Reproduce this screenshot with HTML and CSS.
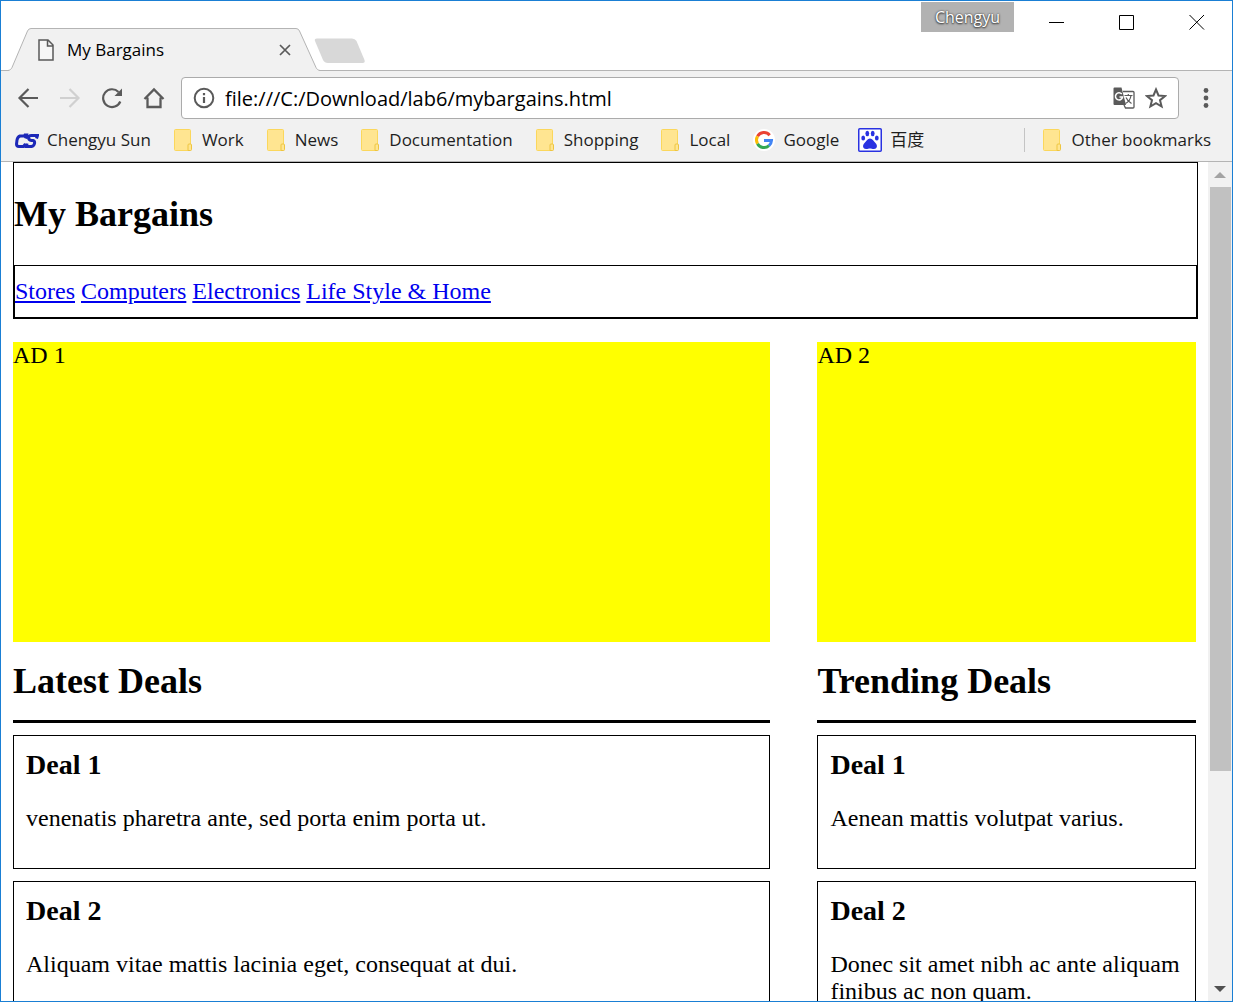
FILE: index.html
```
<!DOCTYPE html>
<html lang="en">
<head>
<meta charset="utf-8">
<title>My Bargains</title>
<link rel="stylesheet" href="styles.css">
</head>
<body>
<svg class="sprite" aria-hidden="true">
  <symbol id="folder" viewBox="0 0 18 22">
    <rect x="0.5" y="0.5" width="16" height="21" rx="1" fill="#ffe591" stroke="#fbd75c"/>
    <path d="M14 21.5v-5.500a1 1 0 0 1 1-1h1.500a1 1 0 0 1 1 1v4.500a1 1 0 0 1-1 1z" fill="#ffe591" stroke="#eec540"/>
  </symbol>
</svg>
<div class="window">
  <header class="titlebar">
    <div class="tabs">
      <div class="tab">
        <svg class="tab-shape" viewBox="0 0 312 43" preserveAspectRatio="none" aria-hidden="true"><path d="M0 43C2 42 3 41.500 4 39.500L19.500 3Q20.500 0.500 23 0.500H288Q290.500 0.500 291.500 3L308 39.500C309 41.500 310 42 312 43Z" fill="#f1f1f1"/><path d="M0 42.500C2 42 3 41.500 4 39.500L19.500 3Q20.500 0.500 23 0.500H288Q290.500 0.500 291.500 3L308 39.500C309 41.500 310 42 312 42.500" fill="none" stroke="#b4b4b4"/></svg>
        <svg class="page-icon" width="16" height="22" viewBox="0 0 16 22" aria-hidden="true"><path d="M1 1h9l5 5v15H1zM9.500 1v6H15" fill="#f7f7f7" stroke="#5a5a5a" stroke-width="1.500"/></svg>
        <span class="tab-title">My Bargains</span>
        <button class="tab-close" aria-label="Close tab"><svg width="12" height="12" viewBox="0 0 12 12"><path d="M1 1l10 10M11 1L1 11" stroke="#5a5a5a" stroke-width="1.700"/></svg></button>
      </div>
      <button class="new-tab" aria-label="New tab"><svg width="52" height="26" viewBox="0 0 52 26"><path d="M3 0.500H38Q41 0.500 42.500 3L50.500 22Q51.500 25 48.500 25H14Q10.500 25 9 22L1 3Q0 0.500 3 0.500Z" fill="#d8d8d8"/></svg></button>
    </div>
    <div class="controls">
      <button class="profile">Chengyu</button>
      <button class="control" aria-label="Minimize"><svg width="16" height="16" viewBox="0 0 16 16"><path d="M0 8.500h15" stroke="#000"/></svg></button>
      <button class="control" aria-label="Maximize"><svg width="16" height="16" viewBox="0 0 16 16"><path d="M0.500 1.500h14v14h-14z" fill="none" stroke="#000"/></svg></button>
      <button class="control" aria-label="Close"><svg width="16" height="16" viewBox="0 0 16 16"><path d="M0.500 1l14.500 14.500M15 1L0.500 15.500" stroke="#000"/></svg></button>
    </div>
  </header>

  <div class="toolbar">
    <button class="tool" aria-label="Back"><svg width="22" height="22" viewBox="0 0 22 22"><path d="M21 11H3M11.500 2L2.500 11l9 9" fill="none" stroke="#5a5a5a" stroke-width="2.200"/></svg></button>
    <button class="tool" aria-label="Forward" disabled><svg width="22" height="22" viewBox="0 0 22 22"><path d="M1 11h18M10.500 2l9 9-9 9" fill="none" stroke="#d0d0d0" stroke-width="2.200"/></svg></button>
    <button class="tool" aria-label="Reload"><svg width="22" height="22" viewBox="0 0 22 22"><path d="M19.300 14.500A8.900 8.900 0 1 1 17.500 5" fill="none" stroke="#5a5a5a" stroke-width="2.200"/><path d="M21 1.500v7.500H13.500z" fill="#5a5a5a"/></svg></button>
    <button class="tool" aria-label="Home"><svg width="22" height="22" viewBox="0 0 22 22"><path d="M1.500 12L11 2.500 20.500 12M4.500 10.500v9.500h13v-9.500" fill="none" stroke="#5a5a5a" stroke-width="2.300"/></svg></button>
    <div class="omnibox">
      <svg width="22" height="22" viewBox="0 0 22 22" aria-hidden="true"><circle cx="11" cy="11" r="9.300" fill="none" stroke="#5a5a5a" stroke-width="2"/><path d="M11 10v6M11 6v2.300" stroke="#5a5a5a" stroke-width="2.200"/></svg>
      <input class="address" type="text" aria-label="Address" value="file:///C:/Download/lab6/mybargains.html">
      <button class="tool" aria-label="Translate"><svg width="22" height="22" viewBox="0 0 22 22"><path d="M10 4.500h10a1 1 0 0 1 1 1V20a1 1 0 0 1-1 1h-7.500l-1.500-3" fill="#fff" stroke="#5a5a5a" stroke-width="1.300"/><path d="M1.500 0.500H8.500L13 18H1.500a1 1 0 0 1-1-1V1.500a1 1 0 0 1 1-1z" fill="#5a5a5a"/><path d="M8.800 7A3.600 3.600 0 1 0 9.600 10H6.500" fill="none" stroke="#fff" stroke-width="1.500"/><path d="M11.500 8.500h8M15.300 7v1.500M12.500 16.500c3-1.500 5-4.500 5.500-8M13 10.500c1 2.500 3 4.500 5.500 6" fill="none" stroke="#5a5a5a" stroke-width="1.200"/></svg></button>
      <button class="tool" aria-label="Bookmark this page"><svg width="22" height="22" viewBox="0 0 22 22"><path d="M11 2.500l2.500 6 6.500.5-5 4.200 1.600 6.300L11 16.100l-5.600 3.400L7 13.200 2 9l6.500-.5z" fill="none" stroke="#5a5a5a" stroke-width="2"/></svg></button>
    </div>
    <button class="tool menu" aria-label="Menu"><svg width="22" height="22" viewBox="0 0 22 22"><circle cx="11" cy="3.500" r="2.400" fill="#5a5a5a"/><circle cx="11" cy="11" r="2.400" fill="#5a5a5a"/><circle cx="11" cy="18.500" r="2.400" fill="#5a5a5a"/></svg></button>
  </div>

  <nav class="bookmarks" aria-label="Bookmarks">
    <a class="bookmark" href="#"><svg width="24" height="24" viewBox="0 0 24 24" aria-hidden="true"><path d="M10.500 10.500L11.500 7H10l-.5 1H5Q2.500 9 2 12L1.500 16q0 2.500 2.500 2.500h4.500l2-2.500M21.500 10.500l1-3h-6q-3 0-3 2.300t3 2.700h1.500q2 .5 1.500 3t-3 3h-5l.5-3" fill="none" stroke="#1c28b8" stroke-width="3"/></svg>Chengyu Sun</a>
    <a class="bookmark" href="#"><svg class="folder"><use href="#folder"/></svg>Work</a>
    <a class="bookmark" href="#"><svg class="folder"><use href="#folder"/></svg>News</a>
    <a class="bookmark" href="#"><svg class="folder"><use href="#folder"/></svg>Documentation</a>
    <a class="bookmark" href="#"><svg class="folder"><use href="#folder"/></svg>Shopping</a>
    <a class="bookmark" href="#"><svg class="folder"><use href="#folder"/></svg>Local</a>
    <a class="bookmark" href="#"><svg width="22" height="24" viewBox="0 0 22 24" aria-hidden="true"><circle cx="11" cy="12" r="11" fill="#fff"/><g fill="none" stroke-width="3"><path d="M16.700 7.200A7.500 7.500 0 0 0 4.500 8.300" stroke="#ea4335"/><path d="M4.500 8.300a7.500 7.500 0 0 0 0 7.400" stroke="#fbbc05"/><path d="M4.500 15.700a7.500 7.500 0 0 0 11.500 2" stroke="#34a853"/><path d="M16 17.700a7.500 7.500 0 0 0 2.500-5.200H11" stroke="#4285f4"/></g></svg>Google</a>
    <a class="bookmark baidu" href="#"><svg width="24" height="24" viewBox="0 0 24 24" aria-hidden="true"><rect x="0.750" y="0.750" width="22.500" height="22.500" rx="1" fill="#fff" stroke="#2932e1" stroke-width="1.500"/><g fill="#2932e1"><ellipse cx="5.200" cy="10" rx="1.900" ry="2.600"/><ellipse cx="9.300" cy="5.500" rx="1.900" ry="2.700"/><ellipse cx="14.700" cy="5.500" rx="1.900" ry="2.700"/><ellipse cx="18.800" cy="10" rx="1.900" ry="2.600"/><path d="M12 10.500c2.500 0 3.500 2.500 5.500 4.500 2.500 2.500 1.500 6-1.500 6-2 0-2.500-.5-4-.5s-2 .5-4 .5c-3 0-4-3.500-1.500-6 2-2 3-4.500 5.500-4.500z"/></g></svg>百度</a>
    <a class="bookmark other" href="#"><svg class="folder"><use href="#folder"/></svg>Other bookmarks</a>
  </nav>

  <div class="viewport">
    <main class="page">
      <header class="site-header">
        <h1>My Bargains</h1>
        <nav class="site-nav">
          <a href="#">Stores</a>
          <a href="#">Computers</a>
          <a href="#">Electronics</a>
          <a href="#">Life Style &amp; Home</a>
        </nav>
      </header>
      <div class="columns">
        <section>
          <div class="ad">AD 1</div>
          <h2>Latest Deals</h2>
          <article class="deal"><h3>Deal 1</h3><p>venenatis pharetra ante, sed porta enim porta ut.</p></article>
          <article class="deal"><h3>Deal 2</h3><p>Aliquam vitae mattis lacinia eget, consequat at dui.</p></article>
        </section>
        <section>
          <div class="ad">AD 2</div>
          <h2>Trending Deals</h2>
          <article class="deal"><h3>Deal 1</h3><p>Aenean mattis volutpat varius.</p></article>
          <article class="deal"><h3>Deal 2</h3><p>Donec sit amet nibh ac ante aliquam finibus ac non quam.</p></article>
        </section>
      </div>
    </main>
    <div class="scrollbar" aria-hidden="true">
      <svg width="24" height="25" viewBox="0 0 24 25"><path d="M6 16l6-6 6 6z" fill="#a3a3a3"/></svg>
      <div class="track"><div class="thumb"></div></div>
      <svg width="24" height="25" viewBox="0 0 24 25"><path d="M6 10l6 6 6-6z" fill="#505050"/></svg>
    </div>
  </div>
</div>
</body>
</html>
```
FILE: styles.css
```
* { box-sizing: border-box; }

body {
  margin: 0;
  background: #fff;
  color: #000;
  font-family: "Liberation Serif", "Times New Roman", serif;
  font-size: 24px;
  line-height: 27px;
}

button {
  padding: 0;
  border: 0;
  background: none;
  font: inherit;
}

svg { display: block; flex: none; }
.sprite { position: absolute; width: 0; height: 0; }

.window {
  display: flex;
  flex-direction: column;
  height: 100vh;
  border: 1px solid #1a7fd4;
  overflow: hidden;
}

.titlebar, .toolbar, .bookmarks {
  flex: none;
  display: flex;
  font-family: "Open Sans", "Noto Sans", "Noto Sans CJK SC", sans-serif;
  font-size: 17px;
  line-height: 24px;
}

/* Title bar */
.titlebar {
  height: 70px;
  justify-content: space-between;
  box-shadow: inset 0 -1px #b4b4b4;
}

.tabs { display: flex; align-items: flex-end; padding-left: 7px; }

.tab {
  position: relative;
  display: flex;
  align-items: center;
  gap: 13px;
  width: 312px;
  height: 43px;
  padding: 0 29px 0 30px;
}

.tab-shape { position: absolute; inset: 0; width: 100%; height: 100%; }
.page-icon, .tab-title, .tab-close { position: relative; }
.tab-title { flex: 1; }
.new-tab { margin: 0 0 7px -6px; }

.controls { display: flex; align-items: flex-start; }

.profile {
  width: 93px;
  height: 30px;
  margin: 1px 8px 0 0;
  background: #b2b2b2;
  color: #fff;
  font-size: 16px;
  text-shadow: 0 0 2px #333, 0 1px 2px #333;
}

.control { display: grid; place-items: center; width: 70px; height: 42px; }

/* Toolbar */
.toolbar {
  align-items: center;
  gap: 20px;
  height: 54px;
  padding: 0 15px 0 16px;
  background: #f1f1f1;
}

.tool { flex: none; }

.omnibox {
  flex: 1;
  display: flex;
  align-items: center;
  gap: 10px;
  height: 42px;
  margin-left: -4px;
  padding: 0 11px;
  border: 1px solid #ababab;
  border-radius: 4px;
  background: #fff;
}

.address {
  flex: 1;
  min-width: 0;
  height: 36px;
  padding: 0;
  border: 0;
  outline: 0;
  background: none;
  font: 20px/28px "Open Sans", "Noto Sans", sans-serif;
}

.menu { margin-left: -4px; }

/* Bookmarks bar */
.bookmarks {
  align-items: center;
  gap: 23px;
  height: 37px;
  padding: 0 21px 7px 14px;
  border-bottom: 1px solid #b4b4b4;
  background: #f1f1f1;
}

.bookmark {
  display: flex;
  align-items: center;
  gap: 8px;
  color: #1e1e1e;
  text-decoration: none;
  white-space: nowrap;
}

.folder { width: 18px; height: 22px; margin-right: 2px; }

.baidu { margin-left: -4px; }

.other {
  margin-left: auto;
  padding-left: 18px;
  border-left: 1px solid #c4c4c4;
}

/* Page area */
.viewport { flex: 1; display: flex; min-height: 0; }

.page { flex: 1; min-width: 0; padding: 0 10px 0 12px; overflow: hidden; }

h1, h2 { margin: 0; font-size: 36px; line-height: 42px; }

.site-header { border: 1px solid #000; }
.site-header h1 { padding: 30px 0; }
.site-nav { padding: 12px 0; border: 1px solid #000; }
.site-nav a { color: #0000ee; }

.columns {
  display: grid;
  grid-template-columns: 64% 32%;
  column-gap: 4%;
  padding: 23px 2px 0 0;
}

.ad { height: 300px; background: #ff0; }

h2 { padding: 18px 0; border-bottom: 3px solid #000; }

.deal { margin-top: 12px; padding: 12px; border: 1px solid #000; }
.deal h3 { margin: 0; font-size: 28px; line-height: 33px; }
.deal p { margin: 24px 0; }

/* Scrollbar */
.scrollbar {
  flex: none;
  display: flex;
  flex-direction: column;
  width: 24px;
  background: #f1f1f1;
}

.track { flex: 1; padding: 0 1px 0 2px; }
.thumb { height: 74%; background: #c1c1c1; }
```
